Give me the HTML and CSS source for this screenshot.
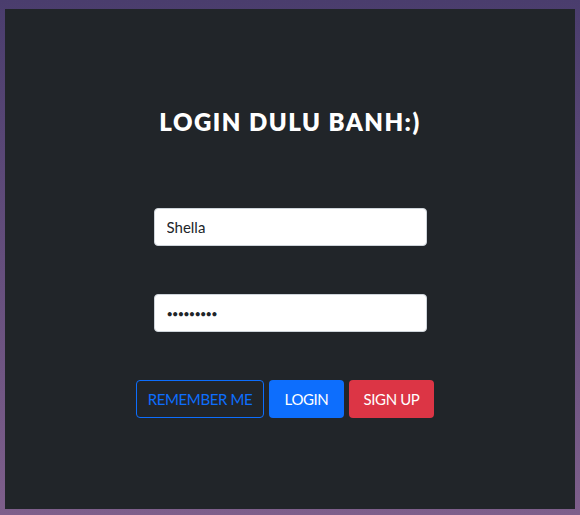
FILE: index.html
```html
<!DOCTYPE html>
<html lang="id">
<head>
<meta charset="utf-8">
<title>Login</title>
<link rel="stylesheet" href="styles.css">
</head>
<body>
<div class="frame">
  <main class="panel">
    <h1 class="title">LOGIN DULU BANH:)</h1>
    <form class="form">
      <input class="field" type="text" value="Shella">
      <input class="field field-pass" type="password" value="shella123">
      <div class="actions">
        <button type="button" class="btn btn-outline">REMEMBER ME</button>
        <button type="button" class="btn btn-primary">LOGIN</button>
        <button type="button" class="btn btn-danger">SIGN UP</button>
      </div>
    </form>
  </main>
</div>
</body>
</html>
```

FILE: styles.css
```css
* { box-sizing: border-box; }
html, body { margin: 0; height: 100%; }
body {
  font-family: "Lato", "Open Sans", sans-serif;
}
.frame {
  height: 515px;
  padding: 9px 5px 6px 5px;
  background: linear-gradient(180deg, #4a3d6d 0%, #7e5f8b 100%);
}
.panel {
  height: 100%;
  background: #212529;
  padding-top: 98px;
  display: flex;
  flex-direction: column;
  align-items: center;
}
.title {
  margin: 0;
  color: #fff;
  font-size: 24px;
  line-height: 29px;
  font-weight: 800;
  letter-spacing: 1.5px;
}
.form {
  margin-top: 72px;
  display: flex;
  flex-direction: column;
  align-items: center;
  gap: 48px;
}
.field {
  width: 273px;
  height: 38px;
  border: 1px solid #ced4da;
  border-radius: 4px;
  background: #fff;
  padding: 0 12px;
  font-family: "Lato", sans-serif;
  font-size: 15px;
  color: #212529;
  outline: none;
}
.field-pass {
  font-size: 11px;
  letter-spacing: -0.8px;
}
.actions {
  display: flex;
  gap: 5px;
  margin-left: -10px;
}
.btn {
  height: 38px;
  padding: 0;
  border-radius: 4px;
  font-family: "Lato", sans-serif;
  font-size: 15px;
  letter-spacing: -0.4px;
  white-space: nowrap;
  border: 1px solid transparent;
  color: #fff;
  cursor: pointer;
}
.btn-outline {
  width: 128px;
  background: transparent;
  border-color: #0d6efd;
  color: #0d6efd;
}
.btn-primary {
  width: 75px;
  background: #0d6efd;
}
.btn-danger {
  width: 85px;
  background: #dc3545;
}
```
